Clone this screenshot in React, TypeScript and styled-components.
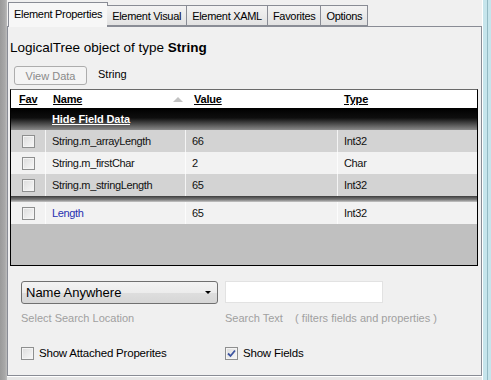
import * as React from 'react';
import styled, { createGlobalStyle } from 'styled-components';

const GlobalStyle = createGlobalStyle`
    html, body {
        margin: 0;
        padding: 0;
        background: #f0f0f0;
    }
    body {
        font-family: "Liberation Sans", Arial, sans-serif;
        font-size: 11px;
        color: #000;
    }
`;

const Window = styled.div`
    width: 491px;
    height: 380px;
    display: flex;
    overflow: hidden;
    background: #f0f0f0;
`;

const LeftEdge = styled.div`
    width: 7px;
    flex: none;
    background: linear-gradient(to right, #9a9a9a, #a9a9a9 70%, #bdbdbd);
`;

const RightEdge = styled.div`
    width: 9px;
    flex: none;
    background: linear-gradient(to right, #ffffff 0 1px, #c6e5ec 1px 5px, #93b9c3 5px 6px, #c6e5ec 6px);
`;

const Main = styled.div`
    flex: 1;
    display: flex;
    flex-direction: column;
    padding-top: 2px;
`;

const BottomEdge = styled.div`
    height: 3px;
    flex: none;
    background: #e6e6e6;
    border-top: 1px solid #ffffff;
`;

const TabStrip = styled.div`
    height: 24px;
    display: flex;
    align-items: flex-end;
    padding-left: 1px;
    position: relative;
    z-index: 1;
`;

const Tab = styled.div<{ $active?: boolean }>`
    height: ${p => (p.$active ? '25px' : '21px')};
    margin-bottom: ${p => (p.$active ? '-1px' : '0')};
    margin-right: ${p => (p.$active ? '-1px' : '0')};
    padding: 0 ${p => (p.$active ? '5px' : '5px')};
    display: flex;
    align-items: center;
    padding-bottom: ${p => (p.$active ? '3px' : '0')};
    box-sizing: border-box;
    border: 1px solid #898c95;
    border-bottom: ${p => (p.$active ? 'none' : '1px solid #898c95')};
    border-left-width: ${p => (p.$active ? '1px' : '0')};
    background: ${p => (p.$active ? '#f7f7f7' : 'linear-gradient(#f3f3f3, #e2e2e2)')};
    letter-spacing: -0.3px;
    white-space: nowrap;
`;

const Panel = styled.div`
    flex: 1;
    border: 1px solid #898c95;
    background: #f0f0f0;
    padding: 13px 3px 0 2px;
    display: flex;
    flex-direction: column;
`;

const Title = styled.div`
    font-size: 13.5px;
    line-height: 16px;
    b {
        font-weight: bold;
    }
`;

const ViewRow = styled.div`
    margin-top: 10px;
    padding-left: 4px;
    display: flex;
    align-items: center;
    gap: 11px;
`;

const ViewButton = styled.button`
    width: 73px;
    height: 19px;
    padding: 0;
    font: inherit;
    font-size: 11px;
    color: #8a8a8a;
    background: #f4f4f4;
    border: 1px solid #adadad;
    border-radius: 3px;
`;

const TypeName = styled.span`
    font-size: 11px;
    margin-top: -4px;
`;

const Grid = styled.div`
    margin-top: 4px;
    border: 1px solid #000;
    border-top-color: #6a6a6a;
    display: flex;
    flex-direction: column;
    font-size: 11px;
    letter-spacing: -0.35px;
`;

const columns = '34px 140px 152px 1fr';

const HeaderRow = styled.div`
    display: grid;
    grid-template-columns: ${columns};
    height: 18px;
    background: #ffffff;
    align-items: center;
`;

const HeadCell = styled.div<{ $pad?: number }>`
    padding-left: ${p => p.$pad ?? 8}px;
    display: flex;
    align-items: center;
    justify-content: space-between;
    padding-right: 2px;
    span {
        font-weight: bold;
        text-decoration: underline;
        letter-spacing: -0.2px;
    }
`;

const SortArrow = styled.i`
    width: 0;
    height: 0;
    border-left: 5px solid transparent;
    border-right: 5px solid transparent;
    border-bottom: 5px solid #c2c2c2;
    margin-top: 1px;
`;

const GroupRow = styled.div`
    height: 22px;
    display: flex;
    align-items: center;
    padding-left: 41px;
    background: linear-gradient(#000000, #0e0e0e 45%, #8a8a8a);
    color: #ffffff;
    font-weight: bold;
    text-decoration: underline;
    letter-spacing: -0.1px;
`;

const Row = styled.div<{ $shade?: boolean }>`
    display: grid;
    grid-template-columns: ${columns};
    height: 22px;
    background: ${p => (p.$shade ? '#d3d3d3' : '#f2f2f2')};
`;

const Cell = styled.div<{ $pad?: number; $blue?: boolean }>`
    display: flex;
    align-items: center;
    padding-left: ${p => p.$pad ?? 6}px;
    border-left: 1px solid rgba(255, 255, 255, 0.75);
    color: ${p => (p.$blue ? '#2630b0' : '#111')};
    &:first-child {
        border-left: none;
        padding-left: 11px;
    }
`;

const Separator = styled.div`
    height: 6px;
    background: linear-gradient(#3c3c3c, #7a7a7a 60%, #c8c8c8);
`;

const Empty = styled.div`
    height: 41px;
    background: #c0c0c0;
`;

const Box = styled.span`
    width: 13px;
    height: 13px;
    box-sizing: border-box;
    flex: none;
    border: 1px solid #8e8f8f;
    background: linear-gradient(135deg, #dcdcdc, #f8f8f8);
    box-shadow: inset 0 0 0 1px #f4f4f4;
    display: flex;
    align-items: center;
    justify-content: center;
`;

const Search = styled.div`
    margin-top: 15px;
    padding-left: 11px;
    display: grid;
    grid-template-columns: 204px 1fr;
    row-gap: 7px;
`;

const Combo = styled.div`
    width: 197px;
    height: 23px;
    box-sizing: border-box;
    border: 1px solid #707070;
    border-radius: 3px;
    background: linear-gradient(#f3f3f3, #ececec 50%, #dedede 51%, #d6d6d6);
    display: flex;
    align-items: center;
    justify-content: space-between;
    padding: 0 6px 0 4px;
    font-size: 13px;
`;

const ComboArrow = styled.i`
    width: 0;
    height: 0;
    border-left: 3px solid transparent;
    border-right: 3px solid transparent;
    border-top: 3px solid #000;
`;

const TextInput = styled.div`
    width: 158px;
    height: 22px;
    box-sizing: border-box;
    background: #ffffff;
    border: 1px solid #e2e2e2;
`;

const Hint = styled.div`
    color: #a0a0a0;
    line-height: 14px;
    white-space: pre;
`;

const CheckLine = styled.label`
    margin-top: 14px;
    display: flex;
    align-items: center;
    gap: 5px;
    height: 14px;
    font-size: 11.5px;
    letter-spacing: -0.2px;
`;

const CheckBox: React.FC<{ checked?: boolean }> = ({ checked }) => (
    <Box>
        {checked && (
            <svg width="9" height="9" viewBox="0 0 9 9">
                <path d="M1 4.5 L3.5 7 L8 1.5" fill="none" stroke="#3c54a0" strokeWidth="1.8" />
            </svg>
        )}
    </Box>
);

type FieldRow = { name: string; value: string; type: string };

const fields: FieldRow[] = [
    { name: 'String.m_arrayLength', value: '66', type: 'Int32' },
    { name: 'String.m_firstChar', value: '2', type: 'Char' },
    { name: 'String.m_stringLength', value: '65', type: 'Int32' },
];

const tabs = ['Element Properties', 'Element Visual', 'Element XAML', 'Favorites', 'Options'];

export default function App() {
    return (
        <>
            <GlobalStyle />
            <Window>
                <LeftEdge />
                <Main>
                    <TabStrip>
                        {tabs.map((t, i) => (
                            <Tab key={t} $active={i === 0}>{t}</Tab>
                        ))}
                    </TabStrip>
                    <Panel>
                        <Title>LogicalTree object of type <b>String</b></Title>
                        <ViewRow>
                            <ViewButton disabled>View Data</ViewButton>
                            <TypeName>String</TypeName>
                        </ViewRow>
                        <Grid>
                            <HeaderRow>
                                <HeadCell><span>Fav</span></HeadCell>
                                <HeadCell $pad={8}><span>Name</span><SortArrow /></HeadCell>
                                <HeadCell $pad={9}><span>Value</span></HeadCell>
                                <HeadCell $pad={7}><span>Type</span></HeadCell>
                            </HeaderRow>
                            <GroupRow>Hide Field Data</GroupRow>
                            {fields.map((f, i) => (
                                <Row key={f.name} $shade={i % 2 === 0}>
                                    <Cell><CheckBox /></Cell>
                                    <Cell>{f.name}</Cell>
                                    <Cell>{f.value}</Cell>
                                    <Cell>{f.type}</Cell>
                                </Row>
                            ))}
                            <Separator />
                            <Row>
                                <Cell><CheckBox /></Cell>
                                <Cell $blue>Length</Cell>
                                <Cell>65</Cell>
                                <Cell>Int32</Cell>
                            </Row>
                            <Empty />
                        </Grid>
                        <Search>
                            <Combo>Name Anywhere<ComboArrow /></Combo>
                            <TextInput />
                            <Hint>Select Search Location</Hint>
                            <Hint>{'Search Text    ( filters fields and properties )'}</Hint>
                            <CheckLine><CheckBox />Show Attached Properites</CheckLine>
                            <CheckLine><CheckBox checked />Show Fields</CheckLine>
                        </Search>
                    </Panel>
                    <BottomEdge />
                </Main>
                <RightEdge />
            </Window>
        </>
    );
}
